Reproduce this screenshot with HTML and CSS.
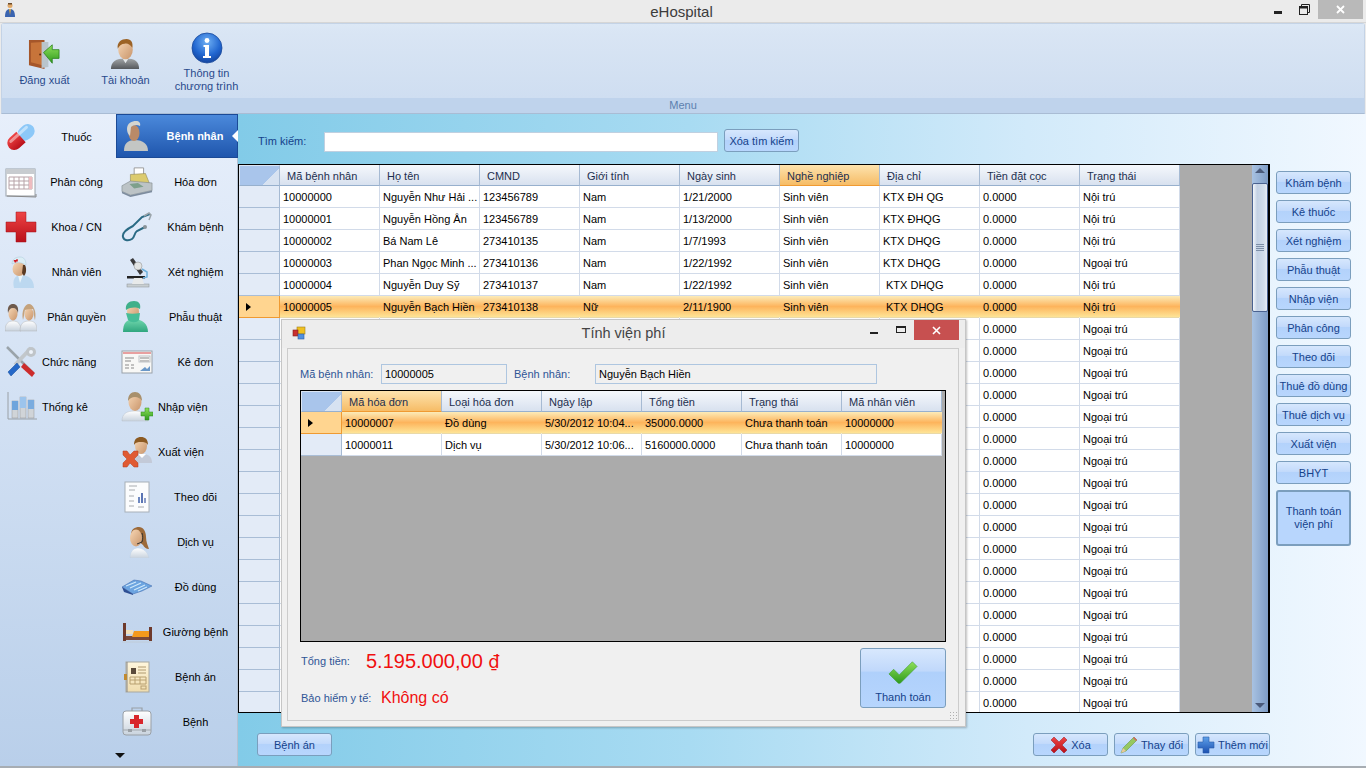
FILE: index.html
```html
<!DOCTYPE html>
<html lang="vi">
<head>
    <meta charset="UTF-8">
    <meta name="viewport" content="width=device-width, initial-scale=1.0">
    <title>eHospital</title>
    <link rel="stylesheet" href="styles.css">
</head>
<body>
    <!-- shared icons -->
    <svg class="sprite" xmlns="http://www.w3.org/2000/svg">
        <defs>
            <linearGradient id="gSkin" x1="0" y1="0" x2="1" y2="1"><stop offset="0" stop-color="#f7d7b5"/><stop offset="1" stop-color="#c8946a"/></linearGradient>
            <linearGradient id="gGrey" x1="0" y1="0" x2="0" y2="1"><stop offset="0" stop-color="#a3a6a8"/><stop offset="1" stop-color="#55585c"/></linearGradient>
            <linearGradient id="gWhite" x1="0" y1="0" x2="0" y2="1"><stop offset="0" stop-color="#ffffff"/><stop offset="1" stop-color="#c9d3de"/></linearGradient>
            <linearGradient id="gRed" x1="0" y1="0" x2="0" y2="1"><stop offset="0" stop-color="#ee4444"/><stop offset="1" stop-color="#b9101a"/></linearGradient>
            <linearGradient id="gGreen" x1="0" y1="0" x2="0" y2="1"><stop offset="0" stop-color="#8ee05a"/><stop offset="1" stop-color="#2f9a1e"/></linearGradient>
            <linearGradient id="gBlue" x1="0" y1="0" x2="0" y2="1"><stop offset="0" stop-color="#5fa2ea"/><stop offset="1" stop-color="#1b4fb0"/></linearGradient>
            <radialGradient id="gInfo" cx=".5" cy=".3" r=".75"><stop offset="0" stop-color="#6fb0f4"/><stop offset=".6" stop-color="#2166d0"/><stop offset="1" stop-color="#123f96"/></radialGradient>
            <linearGradient id="gTeal" x1="0" y1="0" x2="0" y2="1"><stop offset="0" stop-color="#72d8ae"/><stop offset="1" stop-color="#2fa67e"/></linearGradient>
            <linearGradient id="gPaper" x1="0" y1="0" x2="0" y2="1"><stop offset="0" stop-color="#fff6dc"/><stop offset="1" stop-color="#efdcae"/></linearGradient>
        </defs>

        <symbol id="i-door" viewBox="0 0 34 34">
            <path d="M1 2h16v30L1 28z" fill="#a5562a"/>
            <path d="M3 5l12-1v24L3 25z" fill="#c7743a"/>
            <path d="M14 4h7v26l-7 1z" fill="#b9c4cc"/>
            <path d="M17 12l9-8v5h7v9h-7v5z" fill="url(#gGreen)" stroke="#27801a" stroke-width=".8" transform="translate(-1 3)"/>
            <circle cx="12.5" cy="17" r="1" fill="#5b2c10"/>
        </symbol>
        <symbol id="i-user" viewBox="0 0 34 34">
            <path d="M2 32c0-8 5-11 15-11s14 3 14 11z" fill="url(#gGrey)"/>
            <path d="M14 21l3 5 3-5z" fill="#e3e6e9"/>
            <ellipse cx="17" cy="12" rx="7.5" ry="10" fill="url(#gSkin)"/>
            <path d="M9 11c-1-7 4-10 9-10s7 4 6 9c-2-3-5-5-8-4-3 0-5 2-7 5z" fill="#9c6326"/>
        </symbol>
        <symbol id="i-info" viewBox="0 0 32 32">
            <circle cx="16" cy="16" r="15" fill="url(#gInfo)" stroke="#1a4a9c" stroke-width=".8"/>
            <circle cx="16" cy="8.5" r="2.4" fill="#fff"/>
            <path d="M12.5 13h5.500v11h2v2h-8v-2h2v-9h-1.500z" fill="#fff"/>
        </symbol>
        <symbol id="i-pill" viewBox="0 0 32 32">
            <g transform="rotate(-42 16 16)">
                <rect x="14" y="9" width="18" height="14" rx="7" fill="#8cc8f8"/>
                <path d="M16 9H7a7 7 0 000 14h9z" fill="url(#gRed)"/>
                <rect x="4" y="11" width="24" height="3" rx="1.500" fill="#fff" opacity=".45"/>
            </g>
        </symbol>
        <symbol id="i-patient" viewBox="0 0 32 32">
            <path d="M3 31c0-7 3-11 11-11s13 4 13 11z" fill="#c3c6c4"/>
            <ellipse cx="13" cy="13" rx="5.500" ry="8" fill="#ba8a68"/>
            <path d="M6 9c0-6 5-8 9-8 3 0 5 2 4 5-3-2-7-1-9 1l-1 9C7 14 6 12 6 9z" fill="#d5d5d0"/>
        </symbol>
        <symbol id="i-calendar" viewBox="0 0 32 32">
            <rect x="1" y="3" width="29" height="27" fill="#fff" stroke="#9aa2aa"/>
            <rect x="1" y="3" width="29" height="5" fill="#c8ccd0"/>
            <path d="M4 11h23M4 15h23M4 19h23M4 23h23M4 11v12M9 11v12M14 11v12M19 11v12M24 11v12M27 11v12" stroke="#b7a3a8" stroke-width="1" fill="none"/>
            <rect x="24" y="11" width="3" height="12" fill="#eebcc0"/>
            <path d="M2 30l29 1v-3" fill="none" stroke="#888"/>
        </symbol>
        <symbol id="i-register" viewBox="0 0 34 32">
            <path d="M14 1h10v8H14z" fill="#fff" stroke="#999"/>
            <path d="M10 8l16-1 4 10-20 3z" fill="#dccb6e" stroke="#8d8250" stroke-width=".6"/>
            <path d="M1 20l9-5 23 2v8L10 30 1 26z" fill="#bcc3c6" stroke="#7d858a" stroke-width=".6"/>
            <path d="M9 18l9-1 6 4-10 2z" fill="#7ea08c"/>
            <path d="M1 26l9 4 23-5v2L10 32 1 28z" fill="#7d8c9e"/>
        </symbol>
        <symbol id="i-cross" viewBox="0 0 32 32">
            <path d="M11 1h10v10h10v10H21v10H11V21H1V11h10z" fill="url(#gRed)" stroke="#a01018" stroke-width=".5"/>
        </symbol>
        <symbol id="i-stetho" viewBox="0 0 32 32">
            <path d="M29 3l-8 3-9 9C6 18 1 22 2 26c1 4 6 4 9 2 3-2 2-6 5-8l8-4" fill="none" stroke="#2a6a84" stroke-width="2"/>
            <path d="M23 5l5-3 2 2-2 5" fill="none" stroke="#9aa4aa" stroke-width="1.500"/>
            <circle cx="24" cy="16" r="2" fill="#8a9399"/>
        </symbol>
        <symbol id="i-nurse" viewBox="0 0 32 32">
            <path d="M9 32c-2-8 1-13 7-13s13 3 13 13z" fill="#bcd8f0"/>
            <path d="M13 19l2 8 3-8z" fill="#eaf4f8"/>
            <ellipse cx="14" cy="13" rx="6.500" ry="7" fill="url(#gSkin)"/>
            <path d="M20 9c2 4 1 9-1 11l-2-3 1-8z" fill="#5a3a22"/>
            <path d="M7 8c0-5 4-7 8-7s6 3 6 8C16 6 11 6 7 8z" fill="#dbeef5" stroke="#a8c8d8" stroke-width=".5"/>
            <path d="M9 4h3v-1h2v1h0v2h-2v1h-2V6H9z" fill="#d01a22" transform="scale(.8) translate(2 1)"/>
        </symbol>
        <symbol id="i-micro" viewBox="0 0 32 32">
            <rect x="6" y="28" width="22" height="3" fill="#c9cfd2" stroke="#8a9094" stroke-width=".5"/>
            <rect x="6" y="20" width="18" height="2.500" fill="#222"/>
            <path d="M13 22h8l2 6H11z" fill="#e8eaea"/>
            <path d="M12 2l10 14-3 3L9 4z" fill="#3a3a3c"/>
            <circle cx="17" cy="10" r="4" fill="#e2e4e4" stroke="#888" stroke-width=".5"/>
            <path d="M21 13l5 3v5l-4 1" fill="none" stroke="#6db0dc" stroke-width="1.500"/>
        </symbol>
        <symbol id="i-doctors" viewBox="0 0 32 32">
            <path d="M0 30c0-7 3-10 8-10s8 3 8 10z" fill="url(#gWhite)" stroke="#aaa" stroke-width=".4"/>
            <path d="M15 30c0-7 3-10 9-10s8 3 8 10z" fill="url(#gWhite)" stroke="#aaa" stroke-width=".4"/>
            <ellipse cx="8" cy="13" rx="4.500" ry="6.500" fill="url(#gSkin)"/>
            <path d="M3 12c-1-7 2-9 5-9s6 2 5 9c-1-3-2-5-5-5s-4 2-5 5z" fill="#6e5a4c"/>
            <ellipse cx="24" cy="13" rx="4.500" ry="6.500" fill="url(#gSkin)"/>
            <path d="M18 19c-2-9 2-16 6-16s8 7 6 16c-1-2-1-8-2-11-3 0-6 0-8 1-1 3-1 8-2 10z" fill="#c4a27c"/>
        </symbol>
        <symbol id="i-surgeon" viewBox="0 0 32 32">
            <path d="M2 31c0-8 3-13 11-13s14 5 14 13z" fill="url(#gTeal)"/>
            <ellipse cx="12" cy="11" rx="6" ry="9" fill="url(#gSkin)"/>
            <path d="M5 9c-1-6 3-9 8-9s7 3 6 8c-4-2-9-2-14 1z" fill="#3fb08a"/>
            <path d="M5 12c4 1 9 1 14 0l-1 7c-2 3-8 3-11 0z" fill="#46bd97"/>
        </symbol>
        <symbol id="i-tools" viewBox="0 0 32 32">
            <path d="M2 1l26 26" stroke="#9aa3aa" stroke-width="2.500"/>
            <path d="M19 17l11 10-3 4-11-10z" fill="#cc2c2c"/>
            <path d="M26 2l-16 17" stroke="#c2c7cb" stroke-width="4"/>
            <circle cx="26" cy="6" r="5" fill="#bfc4c8"/>
            <path d="M12 17l-9 9 3 4 9-9z" fill="#2568c8" stroke="#134a98" stroke-width=".5"/>
            <circle cx="26" cy="6" r="2" fill="#eef3fa"/>
        </symbol>
        <symbol id="i-card" viewBox="0 0 32 32">
            <rect x="1" y="5" width="30" height="22" fill="#f8f8f6" stroke="#9aa2aa"/>
            <rect x="2" y="6" width="28" height="2" fill="#e8a0a0"/>
            <path d="M4 12h9M4 15h6M4 19h4M10 19h3M4 22h4M10 22h3M19 12h9M19 15h9" stroke="#8a8a8a" fill="none"/>
            <rect x="18" y="10" width="11" height="6" fill="none" stroke="#c0c4c8"/>
            <path d="M19 25l5-4 2 2 3-3v5z" fill="#6a98c8"/>
        </symbol>
        <symbol id="i-chart" viewBox="0 0 32 32">
            <path d="M3 1v27h29" fill="none" stroke="#9aa0a6"/>
            <rect x="7" y="10" width="6" height="17" fill="#d0d4d8" stroke="#888" stroke-width=".4"/>
            <rect x="7" y="10" width="6" height="9" fill="#6ea4dc"/>
            <rect x="15" y="6" width="6" height="21" fill="#d0d4d8" stroke="#888" stroke-width=".4"/>
            <rect x="15" y="6" width="6" height="11" fill="#9cc4ec"/>
            <rect x="23" y="9" width="6" height="18" fill="#d0d4d8" stroke="#888" stroke-width=".4"/>
            <rect x="23" y="9" width="6" height="9" fill="#7aacdf"/>
        </symbol>
        <symbol id="i-adduser" viewBox="0 0 32 32">
            <path d="M1 30c0-7 4-10 13-10s13 3 13 10z" fill="url(#gWhite)" stroke="#b0b8c0" stroke-width=".4"/>
            <ellipse cx="14" cy="11" rx="6.500" ry="9" fill="url(#gSkin)"/>
            <path d="M7 10c0-6 3-9 7-9s7 3 7 9c-2-3-4-4-7-4s-5 1-7 4z" fill="#a8906c"/>
            <path d="M22 22h4v-4h4v4h4v4h-4v4h-4v-4h-4z" fill="url(#gGreen)" stroke="#2a8a1c" stroke-width=".5" transform="translate(-2 -1)"/>
        </symbol>
        <symbol id="i-deluser" viewBox="0 0 32 32">
            <path d="M10 27c0-6 4-9 11-9s10 3 10 9z" fill="#c3cad8"/>
            <path d="M17 18l4 4 4-4z" fill="#fff"/>
            <ellipse cx="20" cy="10" rx="6" ry="8" fill="url(#gSkin)"/>
            <path d="M13 9c0-6 3-8 7-8s7 2 7 8c-2-3-4-3-7-3s-5 0-7 3z" fill="#8c5a22"/>
            <path d="M4 16l4 0 3 4 4-4 4 0 0 4-4 4 4 4 0 4-4 0-4-4-3 4-4 0 0-4 4-4-4-4z" fill="#e05a32" stroke="#b43a18" stroke-width=".5" transform="translate(-2 -1)"/>
        </symbol>
        <symbol id="i-report" viewBox="0 0 32 32">
            <rect x="4" y="1" width="24" height="30" fill="#fbfcfd" stroke="#a8b0b8"/>
            <path d="M8 5h8M8 9h6M8 15h5M8 20h5M8 25h5M17 26h6" stroke="#a8acb0" fill="none"/>
            <rect x="17" y="16" width="2" height="6" fill="#6e88c0"/>
            <rect x="20" y="12" width="2" height="10" fill="#5a74b4"/>
            <rect x="23" y="17" width="2" height="5" fill="#8a9cc8"/>
        </symbol>
        <symbol id="i-support" viewBox="0 0 32 32">
            <path d="M9 32c0-6 3-10 8-10s10 4 11 10z" fill="url(#gWhite)" stroke="#bcd0e4" stroke-width=".4"/>
            <path d="M10 9c0-6 4-8 8-8s7 4 7 10c0 5 2 9 3 12-3 0-5-2-6-4z" fill="#9c6a3a"/>
            <ellipse cx="15" cy="12" rx="6" ry="8.500" fill="url(#gSkin)"/>
            <path d="M21 7c1 3 1 6 0 9l-5 2" fill="none" stroke="#333" stroke-width="1"/>
        </symbol>
        <symbol id="i-blanket" viewBox="0 0 32 32">
            <path d="M1 16l12-7 7 1 11 5-10 5-9 3z" fill="#6ca4e0" stroke="#3a64a8" stroke-width=".5"/>
            <path d="M5 15l10-4M9 17l11-5M13 19l11-5M17 20l9-4" stroke="#cfe8fa" stroke-width="1.200" fill="none"/>
            <path d="M1 16l11 7 0 1-9-3z" fill="#2e4f94"/>
        </symbol>
        <symbol id="i-bed" viewBox="0 0 32 32">
            <rect x="2" y="7" width="3" height="18" fill="#6e3a2c"/>
            <rect x="28" y="11" width="3" height="14" fill="#6e3a2c"/>
            <rect x="5" y="20" width="23" height="4" fill="#7a4a3a"/>
            <path d="M13 15h15v6H11z" fill="#f49a1c"/>
            <rect x="5" y="14" width="7" height="4" fill="#f3e0b8"/>
            <path d="M1 26h30" stroke="#c0ccd8" stroke-width="1"/>
        </symbol>
        <symbol id="i-record" viewBox="0 0 32 32">
            <rect x="5" y="1" width="23" height="30" fill="url(#gPaper)" stroke="#a8a8a0"/>
            <path d="M6 1v30" stroke="#888" stroke-width="1"/>
            <rect x="3" y="13" width="3" height="6" fill="#c08a30"/>
            <rect x="10" y="7" width="5" height="6" fill="#5a4a3a"/>
            <path d="M17 6h8M17 9h8M17 12h8" stroke="#b09a70" fill="none"/>
            <path d="M9 16h16v7H9zM9 19h16M14 16v7M19 16v7" stroke="#b8a070" fill="none"/>
            <rect x="20" y="25" width="5" height="3" fill="none" stroke="#b8a070"/>
        </symbol>
        <symbol id="i-kit" viewBox="0 0 32 32">
            <path d="M11 5V2h10v3" fill="none" stroke="#9aa0a6" stroke-width="1.200"/>
            <rect x="2" y="5" width="28" height="24" rx="3" fill="url(#gWhite)" stroke="#9aa0a6"/>
            <path d="M13 9h5v4h4v5h-4v4h-5v-4H9v-5h4z" fill="#d8262c"/>
            <path d="M2 24h28" stroke="#a0a6ac"/>
            <rect x="7" y="23" width="4" height="3" fill="#9aa0a6"/>
            <rect x="21" y="23" width="4" height="3" fill="#9aa0a6"/>
        </symbol>
        <symbol id="i-check" viewBox="0 0 32 24">
            <path d="M1 13l5-5 6 6L26 0l5 5-18 18h-2z" fill="url(#gGreen)" stroke="#3a9a2a" stroke-width=".6"/>
        </symbol>
        <symbol id="i-x" viewBox="0 0 18 18">
            <path d="M1 4l3-3 5 5 5-5 3 3-5 5 5 5-3 3-5-5-5 5-3-3 5-5z" fill="url(#gRed)" stroke="#98101a" stroke-width=".5"/>
        </symbol>
        <symbol id="i-pencil" viewBox="0 0 18 18">
            <path d="M1 17l2-5L14 1l3 3L6 15z" fill="#96c860" stroke="#5c8c34" stroke-width=".5"/>
            <path d="M1 17l2-5 3 3z" fill="#e8c89a"/>
            <path d="M13 2l3 3 1-1-3-3z" fill="#d86060"/>
        </symbol>
        <symbol id="i-plus" viewBox="0 0 18 18">
            <path d="M6 1h6v5h5v6h-5v5H6v-5H1V6h5z" fill="url(#gBlue)" stroke="#2a5aa8" stroke-width=".6"/>
        </symbol>
    </svg>

    <header class="titlebar">
        <svg class="app-icon" viewBox="0 0 12 16"><circle cx="6" cy="3.500" r="2.500" fill="#e0a868"/><path d="M4 1h4v1.500H4z" fill="#6a4a2a"/><path d="M1 15c0-6 2-8 5-8s5 2 5 8z" fill="#3a64b0"/><path d="M5 7l1 6 1-6z" fill="#e8b040"/></svg>
        <span class="titlebar-text">eHospital</span>
        <div class="win-controls">
            <span class="wc-min"></span>
            <svg class="wc-restore" viewBox="0 0 11 11"><rect x=".5" y="2.500" width="8" height="8" fill="none" stroke="#222" stroke-width="1"/><rect x=".5" y="2.500" width="8" height="2" fill="#222"/><path d="M2.500 2.500V.5h8v8H8.500" fill="none" stroke="#222"/></svg>
            <span class="wc-close"><svg viewBox="0 0 9 9" width="9" height="9"><path d="M1 1l7 7M8 1L1 8" stroke="#fff" stroke-width="1.800"/></svg></span>
        </div>
    </header>

    <section class="ribbon">
        <div class="ribbon-items">
            <div class="ribbon-item"><svg class="ic-33"><use href="#i-door"/></svg><span>Đăng xuất</span></div>
            <div class="ribbon-item"><svg class="ic-33"><use href="#i-user"/></svg><span>Tài khoản</span></div>
            <div class="ribbon-item"><svg class="ic-32"><use href="#i-info"/></svg><span>Thông tin<br>chương trình</span></div>
        </div>
        <div class="ribbon-caption">Menu</div>
    </section>

    <div class="workspace">
        <nav class="sidebar">
            <div class="nav-col-left">
                <a class="nav-item"><svg class="ic-32"><use href="#i-pill"/></svg><span>Thuốc</span></a>
                <a class="nav-item"><svg class="ic-32"><use href="#i-calendar"/></svg><span>Phân công</span></a>
                <a class="nav-item"><svg class="ic-32"><use href="#i-cross"/></svg><span>Khoa / CN</span></a>
                <a class="nav-item"><svg class="ic-32"><use href="#i-nurse"/></svg><span>Nhân viên</span></a>
                <a class="nav-item"><svg class="ic-32"><use href="#i-doctors"/></svg><span>Phân quyền</span></a>
                <a class="nav-item nav-tight"><svg class="ic-32"><use href="#i-tools"/></svg><span>Chức năng</span></a>
                <a class="nav-item nav-tight"><svg class="ic-32"><use href="#i-chart"/></svg><span>Thống kê</span></a>
            </div>
            <div class="nav-col-right">
                <a class="nav-item nav-active"><svg class="ic-32"><use href="#i-patient"/></svg><span>Bệnh nhân</span></a>
                <a class="nav-item"><svg class="ic-32"><use href="#i-register"/></svg><span>Hóa đơn</span></a>
                <a class="nav-item"><svg class="ic-32"><use href="#i-stetho"/></svg><span>Khám bệnh</span></a>
                <a class="nav-item"><svg class="ic-32"><use href="#i-micro"/></svg><span>Xét nghiệm</span></a>
                <a class="nav-item"><svg class="ic-32"><use href="#i-surgeon"/></svg><span>Phẫu thuật</span></a>
                <a class="nav-item"><svg class="ic-32"><use href="#i-card"/></svg><span>Kê đơn</span></a>
                <a class="nav-item nav-tight"><svg class="ic-32"><use href="#i-adduser"/></svg><span>Nhập viện</span></a>
                <a class="nav-item nav-tight"><svg class="ic-32"><use href="#i-deluser"/></svg><span>Xuất viện</span></a>
                <a class="nav-item"><svg class="ic-32"><use href="#i-report"/></svg><span>Theo dõi</span></a>
                <a class="nav-item"><svg class="ic-32"><use href="#i-support"/></svg><span>Dịch vụ</span></a>
                <a class="nav-item"><svg class="ic-32"><use href="#i-blanket"/></svg><span>Đồ dùng</span></a>
                <a class="nav-item"><svg class="ic-32"><use href="#i-bed"/></svg><span>Giường bệnh</span></a>
                <a class="nav-item"><svg class="ic-32"><use href="#i-record"/></svg><span>Bệnh án</span></a>
                <a class="nav-item"><svg class="ic-32"><use href="#i-kit"/></svg><span>Bệnh</span></a>
                <div class="nav-more"></div>
            </div>
        </nav>

        <main class="content">
            <div class="search-row">
                <label class="search-label" for="search">Tìm kiếm:</label>
                <input class="search-input" id="search" type="text">
                <button class="btn btn-clear" type="button">Xóa tìm kiếm</button>
            </div>

            <div class="middle">
                <div class="grid-box">
                    <table class="grid">
                        <thead>
                            <tr><th class="corner"></th><th>Mã bệnh nhân</th><th>Họ tên</th><th>CMND</th><th>Giới tính</th><th>Ngày sinh</th><th class="sorted">Nghề nghiệp</th><th>Địa chỉ</th><th>Tiền đặt cọc</th><th>Trạng thái</th></tr>
                        </thead>
                        <tbody>
                            <tr><td class="rh"></td><td>10000000</td><td>Nguyễn Như Hải ...</td><td>123456789</td><td>Nam</td><td>1/21/2000</td><td>Sinh viên</td><td>KTX ĐH QG</td><td>0.0000</td><td>Nội trú</td></tr>
                            <tr><td class="rh"></td><td>10000001</td><td>Nguyễn Hồng Ân</td><td>123456789</td><td>Nam</td><td>1/13/2000</td><td>Sinh viên</td><td>KTX ĐHQG</td><td>0.0000</td><td>Nội trú</td></tr>
                            <tr><td class="rh"></td><td>10000002</td><td>Bá Nam Lê</td><td>273410135</td><td>Nam</td><td>1/7/1993</td><td>Sinh viên</td><td>KTX DHQG</td><td>0.0000</td><td>Nội trú</td></tr>
                            <tr><td class="rh"></td><td>10000003</td><td>Phan Ngọc Minh ...</td><td>273410136</td><td>Nam</td><td>1/22/1992</td><td>Sinh viên</td><td>KTX DHQG</td><td>0.0000</td><td>Ngoại trú</td></tr>
                            <tr><td class="rh"></td><td>10000004</td><td>Nguyễn Duy Sỹ</td><td>273410137</td><td>Nam</td><td>1/22/1992</td><td>Sinh viên</td><td class="indent">KTX DHQG</td><td>0.0000</td><td>Nội trú</td></tr>
                            <tr class="selected"><td class="rh"><i class="row-arrow"></i></td><td>10000005</td><td>Nguyễn Bạch Hiền</td><td>273410138</td><td>Nữ</td><td>2/11/1900</td><td>Sinh viên</td><td class="indent">KTX DHQG</td><td>0.0000</td><td>Nội trú</td></tr>
                            <tr><td class="rh"></td><td></td><td></td><td></td><td></td><td></td><td></td><td></td><td>0.0000</td><td>Ngoại trú</td></tr>
                            <tr><td class="rh"></td><td></td><td></td><td></td><td></td><td></td><td></td><td></td><td>0.0000</td><td>Ngoại trú</td></tr>
                            <tr><td class="rh"></td><td></td><td></td><td></td><td></td><td></td><td></td><td></td><td>0.0000</td><td>Ngoại trú</td></tr>
                            <tr><td class="rh"></td><td></td><td></td><td></td><td></td><td></td><td></td><td></td><td>0.0000</td><td>Ngoại trú</td></tr>
                            <tr><td class="rh"></td><td></td><td></td><td></td><td></td><td></td><td></td><td></td><td>0.0000</td><td>Ngoại trú</td></tr>
                            <tr><td class="rh"></td><td></td><td></td><td></td><td></td><td></td><td></td><td></td><td>0.0000</td><td>Ngoại trú</td></tr>
                            <tr><td class="rh"></td><td></td><td></td><td></td><td></td><td></td><td></td><td></td><td>0.0000</td><td>Ngoại trú</td></tr>
                            <tr><td class="rh"></td><td></td><td></td><td></td><td></td><td></td><td></td><td></td><td>0.0000</td><td>Ngoại trú</td></tr>
                            <tr><td class="rh"></td><td></td><td></td><td></td><td></td><td></td><td></td><td></td><td>0.0000</td><td>Ngoại trú</td></tr>
                            <tr><td class="rh"></td><td></td><td></td><td></td><td></td><td></td><td></td><td></td><td>0.0000</td><td>Ngoại trú</td></tr>
                            <tr><td class="rh"></td><td></td><td></td><td></td><td></td><td></td><td></td><td></td><td>0.0000</td><td>Ngoại trú</td></tr>
                            <tr><td class="rh"></td><td></td><td></td><td></td><td></td><td></td><td></td><td></td><td>0.0000</td><td>Ngoại trú</td></tr>
                            <tr><td class="rh"></td><td></td><td></td><td></td><td></td><td></td><td></td><td></td><td>0.0000</td><td>Ngoại trú</td></tr>
                            <tr><td class="rh"></td><td></td><td></td><td></td><td></td><td></td><td></td><td></td><td>0.0000</td><td>Ngoại trú</td></tr>
                            <tr><td class="rh"></td><td></td><td></td><td></td><td></td><td></td><td></td><td></td><td>0.0000</td><td>Ngoại trú</td></tr>
                            <tr><td class="rh"></td><td></td><td></td><td></td><td></td><td></td><td></td><td></td><td>0.0000</td><td>Ngoại trú</td></tr>
                            <tr><td class="rh"></td><td></td><td></td><td></td><td></td><td></td><td></td><td></td><td>0.0000</td><td>Ngoại trú</td></tr>
                            <tr><td class="rh"></td><td></td><td></td><td></td><td></td><td></td><td></td><td></td><td>0.0000</td><td>Ngoại trú</td></tr>
                        </tbody>
                    </table>
                    <div class="scrollbar">
                        <i class="sb-up"></i>
                        <div class="sb-thumb"><i class="sb-grip"></i></div>
                        <i class="sb-down"></i>
                    </div>
                </div>

                <aside class="actions">
                    <button class="btn btn-action" type="button">Khám bệnh</button>
                    <button class="btn btn-action" type="button">Kê thuốc</button>
                    <button class="btn btn-action" type="button">Xét nghiệm</button>
                    <button class="btn btn-action" type="button">Phẫu thuật</button>
                    <button class="btn btn-action" type="button">Nhập viện</button>
                    <button class="btn btn-action" type="button">Phân công</button>
                    <button class="btn btn-action" type="button">Theo dõi</button>
                    <button class="btn btn-action" type="button">Thuê đồ dùng</button>
                    <button class="btn btn-action" type="button">Thuê dịch vụ</button>
                    <button class="btn btn-action" type="button">Xuất viện</button>
                    <button class="btn btn-action" type="button">BHYT</button>
                    <button class="btn btn-action btn-pay" type="button">Thanh toán<br>viện phí</button>
                </aside>
            </div>

            <div class="bottom-row">
                <button class="btn btn-bottom" type="button">Bệnh án</button>
                <div class="bottom-right">
                    <button class="btn btn-bottom" type="button"><svg class="ic-18"><use href="#i-x"/></svg>Xóa</button>
                    <button class="btn btn-bottom" type="button"><svg class="ic-18"><use href="#i-pencil"/></svg>Thay đổi</button>
                    <button class="btn btn-bottom" type="button"><svg class="ic-18"><use href="#i-plus"/></svg>Thêm mới</button>
                </div>
            </div>
        </main>
    </div>
    <div class="taskstrip"></div>

    <!-- child window -->
    <div class="dialog">
        <div class="dialog-title">
            <svg class="dialog-icon" viewBox="0 0 14 14"><rect x="5" y="1" width="8" height="7" fill="#f0c020" stroke="#a08020" stroke-width=".6"/><rect x="1" y="4" width="5" height="6" fill="#c83030" stroke="#802020" stroke-width=".6"/><rect x="6" y="8" width="6" height="5" fill="#5090e0" stroke="#3060a0" stroke-width=".6"/></svg>
            <span class="dialog-title-text">Tính viện phí</span>
            <span class="dlg-min"></span>
            <span class="dlg-max"></span>
            <span class="dlg-close"><svg viewBox="0 0 9 9" width="9" height="9"><path d="M1 1l7 7M8 1L1 8" stroke="#fff" stroke-width="1.600"/></svg></span>
        </div>
        <div class="dialog-body">
            <div class="field-row">
                <label class="field-label">Mã bệnh nhân:</label>
                <input class="field field-id" type="text" value="10000005" readonly>
                <label class="field-label field-label-2">Bệnh nhân:</label>
                <input class="field field-name" type="text" value="Nguyễn Bạch Hiền" readonly>
            </div>
            <div class="bill-box">
                <table class="grid">
                    <thead>
                        <tr><th class="corner"></th><th class="sorted">Mã hóa đơn</th><th>Loại hóa đơn</th><th>Ngày lập</th><th>Tổng tiền</th><th>Trạng thái</th><th>Mã nhân viên</th></tr>
                    </thead>
                    <tbody>
                        <tr class="selected"><td class="rh"><i class="row-arrow"></i></td><td>10000007</td><td>Đồ dùng</td><td>5/30/2012 10:04...</td><td>35000.0000</td><td>Chưa thanh toán</td><td>10000000</td></tr>
                        <tr><td class="rh"></td><td>10000011</td><td>Dịch vụ</td><td>5/30/2012 10:06...</td><td>5160000.0000</td><td>Chưa thanh toán</td><td>10000000</td></tr>
                    </tbody>
                </table>
            </div>
            <div class="dialog-footer">
                <div class="totals">
                    <div class="total-row">
                        <span class="field-label">Tổng tiền:</span>
                        <span class="total-value">5.195.000,00 <span class="currency">₫</span></span>
                    </div>
                    <div class="total-row total-row-ins">
                        <span class="field-label">Bảo hiểm y tế:</span>
                        <span class="insurance-value">Không có</span>
                    </div>
                </div>
                <button class="btn btn-checkout" type="button"><svg class="ic-check"><use href="#i-check"/></svg>Thanh toán</button>
            </div>
        </div>
        <i class="grip"></i>
    </div>
</body>
</html>
```

FILE: styles.css
```css
* {
    box-sizing: border-box;
}
html, body {
    margin: 0;
    height: 768px;
    overflow: hidden;
}
body {
    display: flex;
    flex-direction: column;
    font-family: "Liberation Sans", Arial, sans-serif;
    font-size: 11px;
    color: #000;
    background: #ebebeb;
}
.sprite {
    display: block;
    width: 0;
    height: 0;
    flex: none;
}
.ic-33 { width: 33px; height: 33px; display: block; flex: none; }
.ic-32 { width: 32px; height: 32px; display: block; flex: none; }
.ic-18 { width: 18px; height: 18px; display: block; flex: none; }

/* window title */
.titlebar {
    flex: none;
    height: 23px;
    display: flex;
    align-items: flex-start;
    padding: 0 3px 0 4px;
    background: #ebebeb;
    border-bottom: 1px solid #d6d6d6;
}
.app-icon {
    width: 12px;
    height: 16px;
    margin-top: 2px;
    flex: none;
}
.titlebar-text {
    flex: 1;
    text-align: center;
    font-size: 15px;
    line-height: 24px;
    color: #3c3c3c;
    padding-left: 75px;
}
.win-controls {
    width: 91px;
    flex: none;
    display: flex;
    align-items: flex-start;
}
.wc-min {
    width: 8px;
    height: 3px;
    margin: 11px 17px 0 2px;
    background: #222;
}
.wc-restore {
    width: 11px;
    height: 11px;
    margin: 4px 8px 0 0;
}
.wc-close {
    width: 45px;
    height: 19px;
    background: #b9b9b9;
    display: flex;
    align-items: center;
    justify-content: center;
}

/* top menu */
.ribbon {
    flex: none;
    height: 91px;
    display: flex;
    flex-direction: column;
    margin: 0 1px;
    border: 1px solid #c4d3e6;
    border-bottom-color: #a9bcd4;
    border-radius: 3px 3px 0 0;
    background: linear-gradient(#dde8f6, #c9daef);
}
.ribbon-items {
    flex: 1;
    display: flex;
    padding-left: 2px;
    background: linear-gradient(#dce8f6 0, #d9e5f4 12%, #cfdef1 100%);
}
.ribbon-item {
    width: 81px;
    display: flex;
    flex-direction: column;
    align-items: center;
    justify-content: center;
    padding-top: 2px;
    text-align: center;
    line-height: 13px;
    color: #2a4a8c;
}
.ribbon-item span {
    padding-top: 3px;
}
.ribbon-caption {
    flex: none;
    height: 15px;
    text-align: center;
    line-height: 15px;
    color: #5d7fae;
    background: #bfd3ec;
}

.workspace {
    flex: 1;
    display: flex;
    min-height: 0;
}

/* left navigation */
.sidebar {
    flex: none;
    width: 238px;
    display: flex;
    background: linear-gradient(#e7effb, #b9cfea);
    border-right: 1px solid #b4c2d2;
}
.nav-col-left { width: 116px; flex: none; }
.nav-col-right { width: 122px; flex: none; }
.nav-item {
    height: 45px;
    display: flex;
    align-items: center;
    padding-left: 5px;
}
.nav-item span {
    flex: 1;
    text-align: center;
    color: #000;
}
.nav-tight span {
    text-align: left;
    padding-left: 5px;
}
.nav-active {
    height: 44px;
    margin-bottom: 1px;
    position: relative;
    background: linear-gradient(#4b89db, #1f56ad);
    border: 1px solid #1b4a96;
    padding-left: 4px;
}
.nav-active span {
    color: #fff;
    font-weight: bold;
}
.nav-active::after {
    content: "";
    position: absolute;
    right: -1px;
    top: 15px;
    border: 6px solid transparent;
    border-right-color: #fff;
    border-left-width: 0;
}
.nav-more {
    width: 0;
    height: 0;
    margin: 9px 0 0 -1px;
    border: 5px solid transparent;
    border-top: 5px solid #111;
    border-bottom-width: 0;
}

/* right side */
.content {
    flex: 1;
    display: flex;
    flex-direction: column;
    min-width: 0;
    background: linear-gradient(90deg, #82cbe8 0, #a8dbf2 40%, #d2eafa 70%, #f1f8ff 100%);
}
.search-row {
    flex: none;
    height: 50px;
    display: flex;
    align-items: flex-start;
    padding: 15px 0 0 20px;
}
.search-label {
    width: 66px;
    flex: none;
    line-height: 24px;
    color: #15428b;
}
.search-input {
    width: 394px;
    height: 20px;
    margin-top: 3px;
    border: 1px solid #c0d0e0;
    background: #fff;
    padding: 0 3px;
}
.btn {
    font: inherit;
    color: #15428b;
    padding: 0;
    border: 1px solid #7b9ebd;
    border-radius: 3px;
    background: linear-gradient(#d6e7fd 0, #c3dafb 45%, #b3d2fb 50%, #b8d6fd 100%);
    white-space: nowrap;
}
.btn-clear {
    width: 75px;
    height: 23px;
    margin-left: 6px;
}

.middle {
    flex: none;
    height: 549px;
    display: flex;
}
.grid-box {
    flex: none;
    width: 1032px;
    height: 549px;
    display: flex;
    background: #ababab;
    border: 1px solid #000;
    border-right-width: 2px;
    overflow: hidden;
}

/* data grids */
.grid {
    border-collapse: separate;
    border-spacing: 0;
    table-layout: fixed;
    align-self: flex-start;
    background: #fff;
    width: 941px;
    flex: none;
}
.grid th {
    width: 100px;
    height: 21px;
    padding: 1px 0 0 7px;
    font-weight: normal;
    text-align: left;
    color: #1d2f4e;
    background: linear-gradient(#f5f8fc, #d8e1ef);
    border-right: 1px solid #a6bad3;
    border-bottom: 1px solid #97b0cd;
    overflow: hidden;
    white-space: nowrap;
}
.grid th.corner {
    width: 41px;
    padding: 0;
    background: linear-gradient(135deg, #a9c5eb 72%, #d7e2f1 72%);
    border: 1px solid #dbe5f2;
    border-right-color: #a6bad3;
    border-bottom-color: #97b0cd;
}
.grid th.sorted {
    background: linear-gradient(#fde3ae, #f6bc66);
    border-bottom: 1px solid #f09a32;
}
.grid td {
    height: 22px;
    padding: 0 0 0 3px;
    background: #fff;
    border-right: 1px solid #d2dbe9;
    border-bottom: 1px solid #d2dbe9;
    white-space: nowrap;
    overflow: hidden;
}
.grid td.rh {
    padding: 0 0 0 7px;
    background: #e3ebf7;
    border-right: 1px solid #a6bad3;
    border-bottom: 1px solid #a9bdd6;
}
.grid td.indent {
    padding-left: 6px;
}
.grid tr.selected td {
    background: linear-gradient(#fcebb8 0, #fdb45c 50%, #fee496 100%);
    border-right-color: transparent;
    border-bottom-color: #e9d9a8;
}
.grid tr.selected td.rh {
    background: #ffd590;
    border-right: 1px solid #ef9a32;
    border-bottom: 1px solid #ef9a32;
}
.row-arrow {
    display: block;
    width: 0;
    height: 0;
    border: 4px solid transparent;
    border-left: 5px solid #000;
    border-right-width: 0;
}

/* scrollbar */
.scrollbar {
    flex: none;
    width: 16px;
    height: 100%;
    margin-left: auto;
    position: relative;
    background: linear-gradient(90deg, #a8c2e2, #7e9cc6);
}
.sb-up, .sb-down {
    position: absolute;
    left: 3px;
    width: 0;
    height: 0;
    border: 5px solid transparent;
}
.sb-up {
    top: 3px;
    border-bottom-color: #4a5a7a;
    border-top-width: 0;
}
.sb-down {
    bottom: 4px;
    border-top-color: #4a5a7a;
    border-bottom-width: 0;
}
.sb-thumb {
    position: absolute;
    top: 18px;
    left: 0;
    width: 16px;
    height: 129px;
    border: 1px solid #4a6290;
    border-radius: 2px;
    background: linear-gradient(90deg, #f2f6fb, #c3d1e4 30%, #d3deec 80%, #e8eef7);
    display: flex;
    align-items: center;
    justify-content: center;
}
.sb-grip {
    width: 8px;
    height: 7px;
    background: repeating-linear-gradient(#7d8fa8 0 1px, transparent 1px 2px);
}

.actions {
    flex: none;
    padding: 7px 0 0 6px;
    display: flex;
    flex-direction: column;
    gap: 6px;
}
.btn-action {
    width: 75px;
    height: 23px;
}
.btn-pay {
    height: 56px;
    border: 2px solid #7b9ebd;
    background: #b8d6fd;
    line-height: 13px;
}

.bottom-row {
    flex: none;
    display: flex;
    justify-content: space-between;
    width: 1032px;
    padding: 20px 0 0 19px;
}
.bottom-right {
    display: flex;
    gap: 6px;
}
.btn-bottom {
    width: 75px;
    height: 23px;
    display: flex;
    align-items: center;
    justify-content: center;
    gap: 3px;
}

.taskstrip {
    flex: none;
    height: 2px;
    background: #a7adb3;
}

/* child window */
.dialog {
    position: absolute;
    left: 281px;
    top: 319px;
    width: 685px;
    height: 408px;
    background: #f0f0f0;
    border: 1px solid #c6c6c6;
    box-shadow: 1px 1px 2px rgba(0, 0, 0, .25);
}
.dialog-title {
    height: 28px;
    display: flex;
    align-items: flex-start;
    background: #ededed;
    position: relative;
}
.dialog-icon {
    width: 14px;
    height: 14px;
    margin: 6px 0 0 10px;
    flex: none;
}
.dialog-title-text {
    position: absolute;
    left: 0;
    right: 0;
    top: 5px;
    text-align: center;
    font-size: 14.5px;
    color: #444;
}
.dlg-min {
    position: absolute;
    left: 588px;
    top: 12px;
    width: 8px;
    height: 2px;
    background: #222;
}
.dlg-max {
    position: absolute;
    left: 614px;
    top: 6px;
    width: 10px;
    height: 7px;
    border: 1px solid #222;
    border-top-width: 2px;
}
.dlg-close {
    position: absolute;
    right: 6px;
    top: 0;
    width: 45px;
    height: 20px;
    background: #c75050;
    display: flex;
    align-items: center;
    justify-content: center;
}
.dialog-body {
    margin: 0 6px 0 5px;
    height: 373px;
    border: 1px solid #cccccc;
    padding: 0 12px;
    display: flex;
    flex-direction: column;
}
.field-row {
    flex: none;
    height: 41px;
    display: flex;
    align-items: flex-start;
    padding-top: 15px;
}
.field-label {
    color: #2f5596;
    line-height: 20px;
    white-space: nowrap;
}
.field-row .field-label {
    width: 81px;
    flex: none;
}
.field-row .field-label-2 {
    margin-left: 7px;
}
.field {
    height: 20px;
    font: inherit;
    color: #000;
    padding: 0 3px;
    background: #f0f0f0;
    border: 1px solid #aec6e0;
    outline: none;
}
.field-id { width: 126px; }
.field-name { width: 282px; }
.bill-box {
    flex: none;
    width: 646px;
    height: 252px;
    display: flex;
    background: #ababab;
    border: 1px solid #000;
    overflow: hidden;
}
.bill-box .grid {
    width: 641px;
}
.dialog-footer {
    flex: 1;
    display: flex;
    justify-content: space-between;
    padding: 6px 0 0 1px;
}
.totals {
    padding-top: 1px;
}
.total-row {
    display: flex;
    align-items: center;
    height: 24px;
}
.total-row-ins {
    margin-top: 13px;
}
.total-row .field-label {
    width: 65px;
}
.total-row-ins .field-label {
    width: 80px;
}
.total-value {
    font-size: 20px;
    color: #f01010;
}
.currency {
    font-family: "DejaVu Sans", sans-serif;
    font-size: 18px;
}
.insurance-value {
    font-size: 16px;
    color: #f01010;
}
.btn-checkout {
    width: 86px;
    height: 60px;
    display: flex;
    flex-direction: column;
    align-items: center;
    justify-content: flex-end;
    padding-bottom: 4px;
    background: linear-gradient(#d8e8fd 0, #c0d8fb 38%, #afd0fb 40%, #b6d5fd 100%);
}
.ic-check {
    width: 30px;
    height: 24px;
    margin-bottom: 6px;
}
.grip {
    position: absolute;
    right: 6px;
    bottom: 6px;
    width: 10px;
    height: 9px;
    background: radial-gradient(circle, #b0b0b0 1px, transparent 1px) 0 0 / 3px 3px;
}
```
